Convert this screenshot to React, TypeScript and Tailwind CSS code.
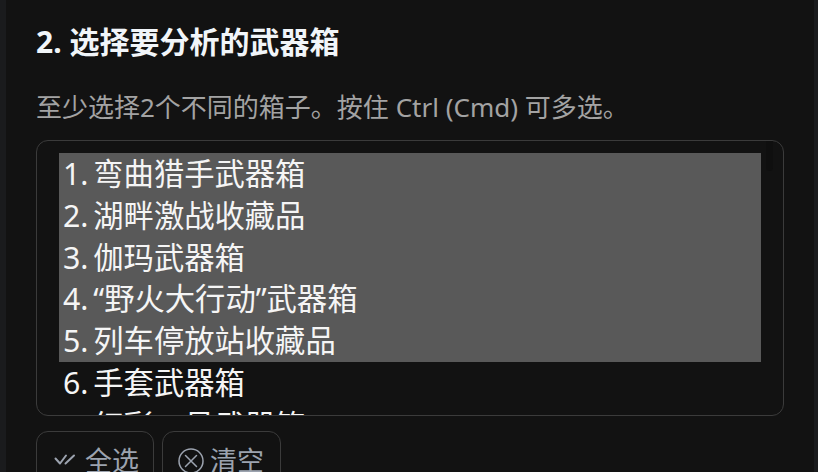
const items = [
  "1. 弯曲猎手武器箱",
  "2. 湖畔激战收藏品",
  "3. 伽玛武器箱",
  "4. “野火大行动”武器箱",
  "5. 列车停放站收藏品",
  "6. 手套武器箱",
  "7. 红彩一号武器箱",
];

export default function App() {
  return (
    <div className="h-[472px] w-[818px] overflow-hidden bg-[#1a1b1d] pr-[4px] pl-[6px] font-['Noto_Sans','Noto_Sans_CJK_SC',sans-serif]">
      <div className="h-full bg-[#121212] px-[30px] pt-[22px]">
        <h2 className="h-[40px] text-[30px] leading-[40px] font-bold text-[#f1f5f9]">2. 选择要分析的武器箱</h2>
        <p className="mt-[26px] h-[38px] text-[26px] leading-[38px] text-[#a3a3a3]">至少选择2个不同的箱子。按住 Ctrl (Cmd) 可多选。</p>
        <div className="relative mt-[14px] h-[276px] overflow-hidden rounded-[12px] border border-[#3b3b3b] pt-[12px] pr-[22px] pl-[22px]">
          <div className="absolute top-0 right-[10px] h-[30px] w-[7px] rounded-b-full bg-[#0f0f0f]" />
          {items.map((t, i) => (
            <div
              key={t}
              className={`h-[41.8px] pl-[4px] text-[30.3px] leading-[41.8px] [word-spacing:-3px] whitespace-nowrap text-[#f5f5f5] ${i < 5 ? "bg-[#595959]" : ""} ${i === 6 ? "pt-[1px]" : ""}`}
            >
              {t}
            </div>
          ))}
        </div>
        <div className="mt-[15px] flex gap-[8px]">
          <button className="flex h-[60px] w-[118px] items-start gap-[7px] rounded-[12px] border border-[#3b3b3b] pt-[10px] pl-[17px] text-[27px] leading-[38px] text-[#9ca3af]">
            <svg viewBox="0 0 24 24" className="mt-[9px] h-[24px] w-[24px]" fill="none" stroke="currentColor" strokeWidth="2" strokeLinecap="round" strokeLinejoin="round">
              <path d="M1.5 7.5L6 12.5L12 4.5" />
              <path d="M11.5 12.5L20 4.5" />
            </svg>
            全选
          </button>
          <button className="flex h-[60px] w-[119px] items-start gap-[6px] rounded-[12px] border border-[#3b3b3b] pt-[10px] pl-[15px] text-[27px] leading-[38px] text-[#9ca3af]">
            <svg viewBox="0 0 26 26" className="mt-[6px] h-[26px] w-[26px]" fill="none" stroke="currentColor" strokeWidth="1.5" strokeLinecap="round">
              <circle cx="13" cy="13" r="12" />
              <path d="M7.5 7.5l11 11M18.5 7.5l-11 11" />
            </svg>
            清空
          </button>
        </div>
      </div>
    </div>
  );
}
